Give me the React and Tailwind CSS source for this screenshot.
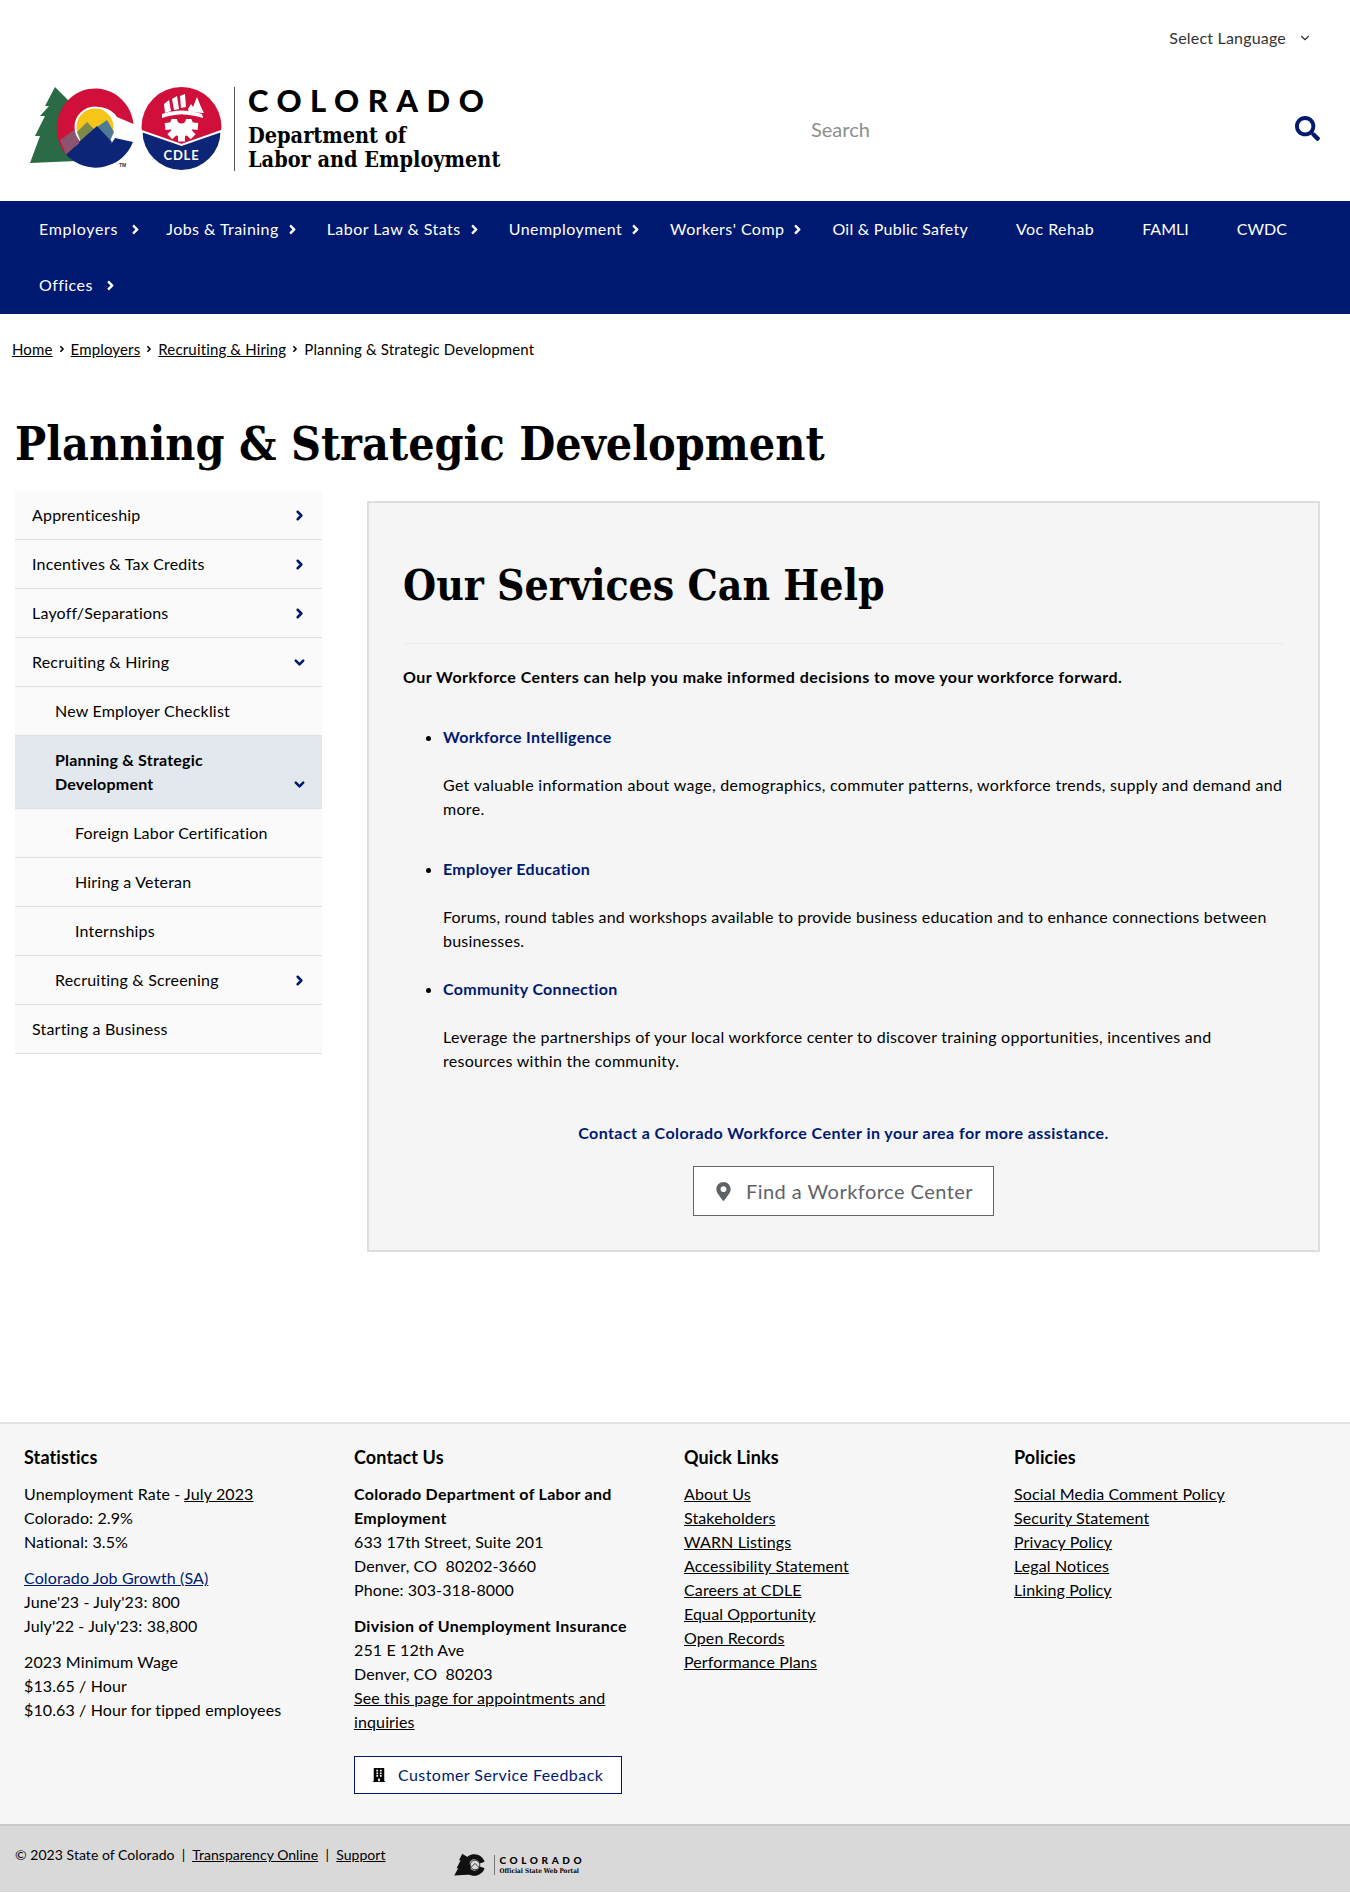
import React from "react";
import { FaSearch, FaAngleRight, FaMapMarkerAlt, FaBuilding } from "react-icons/fa";
import { ChevronDown, ChevronRight } from "lucide-react";

const navItems = [
    { label: "Employers", arrow: "wide", spacing: "tracking-[0.7px]" },
    { label: "Jobs & Training", arrow: "near" },
    { label: "Labor Law & Stats", arrow: "near" },
    { label: "Unemployment", arrow: "near" },
    { label: "Workers' Comp", arrow: "near" },
    { label: "Oil & Public Safety", spacing: "tracking-[0.25px]" },
    { label: "Voc Rehab" },
    { label: "FAMLI", spacing: "tracking-[0px]" },
    { label: "CWDC", spacing: "tracking-[0px]" },
    { label: "Offices", arrow: "wide" },
];

const sideItems = [
    { label: "Apprenticeship", icon: "right" },
    { label: "Incentives & Tax Credits", icon: "right" },
    { label: "Layoff/Separations", icon: "right" },
    { label: "Recruiting & Hiring", icon: "down" },
    { label: "New Employer Checklist", level: 1 },
    { label: "Planning & Strategic Development", level: 1, icon: "down", active: true },
    { label: "Foreign Labor Certification", level: 2 },
    { label: "Hiring a Veteran", level: 2 },
    { label: "Internships", level: 2 },
    { label: "Recruiting & Screening", level: 1, icon: "right" },
    { label: "Starting a Business" },
];

const gearTeeth = [95, 135, 180, 225, 265];

function Logo() {
    return (
        <svg width="210" height="90" viewBox="25 85 210 90" className="shrink-0">
            <defs>
                <clipPath id="gearClip">
                    <rect x="160" y="120" width="44" height="26" />
                </clipPath>
            </defs>
            <polygon points="55,88 45,107 49,107 40,117 45,117 35,137 40,137 30,164 76,162 72,105" fill="#2a6a45" />
            <path d="M133.5,125 A38.5,40 0 1,0 66,155.5 L80,143 A21,21 0 1,1 117,118 Z" fill="#d0103a" />
            <path d="M66,155.5 A40,40 0 0,0 133,143 L115,139 A21,21 0 0,1 80,143 Z" fill="#0c2577" />
            <polygon points="60,141 74,131 80,143 66,155.5" fill="#8d5470" />
            <circle cx="95" cy="128" r="19.5" fill="#f5c518" stroke="#fff" strokeWidth="2" />
            <polygon points="77,133 87,123 98,134 92,146 82,146" fill="#7d8a4c" />
            <polygon points="97,128 107,121 114,133 110,142 102,140" fill="#4f7a96" />
            <path d="M79,143 L97,127 L112,143 A19,19 0 0,1 79,143 Z" fill="#0c2577" />
            <text x="119" y="168" fontSize="5" fontWeight="700" fill="#333" fontFamily="Liberation Sans, sans-serif">TM</text>

            <circle cx="181.5" cy="128" r="40" fill="#d0103a" />
            <path d="M141.5,132 L181.5,146 L221.5,132 A40,40 0 0,1 141.5,132 Z" fill="#0c2577" stroke="#fff" strokeWidth="2" />
            <polygon points="164,105 169,101 171,112 165,114" fill="#fff" />
            <polygon points="172,100 177,97 179,110 174,111" fill="#fff" />
            <polygon points="180,97 185,95 186,108 181,109" fill="#fff" />
            <polygon points="188,110 191,105 193,108 197,98 201,108 204,114 189,113" fill="#fff" />
            <path d="M162,115 Q181,108 202,115 L203,119 Q181,112 162,119 Z" fill="#fff" />
            <g clipPath="url(#gearClip)" fill="#fff">
                <circle cx="181.5" cy="126" r="11.5" />
                {gearTeeth.map((deg) => (
                    <rect key={deg} x="178" y="109.5" width="7" height="7" transform={`rotate(${deg} 181.5 126)`} />
                ))}
            </g>
            <circle cx="181.5" cy="120" r="4.5" fill="#d0103a" />
            <text x="181.5" y="161" textAnchor="middle" fontSize="13" fontWeight="700" fill="#fff" fontFamily="Lato, sans-serif" letterSpacing="0.8">CDLE</text>
            <rect x="234" y="88" width="1.5" height="84" fill="#555" />
        </svg>
    );
}

function SmallLogo() {
    return (
        <svg width="38" height="24" viewBox="0 0 47 30" className="shrink-0">
            <polygon points="10,1 6,9 8,9 3,19 5,19 0,28 22,27 18,6" fill="#111" />
            <path d="M38,11 A13.5,13.5 0 1,0 38,19 L32,17 A7,7 0 1,1 32,13 Z" fill="#111" />
            <circle cx="26" cy="15" r="6" fill="none" stroke="#111" strokeWidth="1" />
            <path d="M21,18 L26,13 L31,18" fill="none" stroke="#111" strokeWidth="1" />
        </svg>
    );
}

function Header() {
    return (
        <header className="bg-white">
            <div className="flex justify-end items-center h-[76px] pr-[38px] text-[16px] tracking-[0.2px] text-[#333]">
                <span>Select Language</span>
                <ChevronDown size={14} strokeWidth={2} className="ml-[12px]" />
            </div>
            <div className="flex items-center h-[125px] pb-[20px] pl-[25px] pr-[30px]">
                <Logo />
                <div className="ml-[13px] w-[506px] text-black -mt-[2px]">
                    <div className="text-[31px] leading-[32px] font-black tracking-[8.5px] font-['Lato']">COLORADO</div>
                    <div className="mt-[8px] text-[21.5px] leading-[24px] font-bold font-['DejaVu_Serif_Condensed','DejaVu_Serif',serif]">Department of</div>
                    <div className="text-[21.5px] leading-[24px] font-bold font-['DejaVu_Serif_Condensed','DejaVu_Serif',serif]">Labor and Employment</div>
                </div>
                <div className="flex-1 flex items-center justify-between ml-[57px]">
                    <span className="text-[20px] text-[#8e8e8e]">Search</span>
                    <FaSearch size={25} className="text-[#001970]" />
                </div>
            </div>
        </header>
    );
}

function Nav() {
    return (
        <nav className="bg-[#001970] flex flex-wrap content-start px-[15px] text-white text-[16px] tracking-[0.45px] h-[113px]">
            {navItems.map((item) => (
                <a key={item.label} className={`flex items-center h-[56px] px-[24px] ${item.spacing || ""}`}>
                    <span>{item.label}</span>
                    {item.arrow === "wide" && <FaAngleRight size={15} className="ml-[10px] -mr-[25px]" />}
                    {item.arrow === "near" && <FaAngleRight size={15} className="ml-[6px] -mr-[21px]" />}
                </a>
            ))}
        </nav>
    );
}

function Breadcrumb() {
    return (
        <div className="flex items-center gap-[4px] px-[12px] pt-[25px] text-[15px] leading-[20px] tracking-[0.15px] text-black">
            <a className="underline">Home</a>
            <FaAngleRight size={10} />
            <a className="underline">Employers</a>
            <FaAngleRight size={10} />
            <a className="underline">Recruiting & Hiring</a>
            <FaAngleRight size={10} />
            <span>Planning & Strategic Development</span>
        </div>
    );
}

function SideNav() {
    return (
        <ul className="w-[307px] shrink-0 tracking-[0.2px]">
            {sideItems.map((item) => {
                const pad = item.level === 2 ? "pl-[60px]" : item.level === 1 ? "pl-[40px]" : "pl-[17px]";
                return (
                    <li
                        key={item.label}
                        className={`flex items-end justify-between pr-[15px] py-[12px] border-b border-[#e0e0e0] leading-[24px] text-[16px] text-black ${pad} ${
                            item.active ? "bg-[#e3e7ee] font-bold" : "bg-[#fafafa]"
                        }`}
                    >
                        <span className={item.active ? "w-[210px]" : ""}>{item.label}</span>
                        {item.icon === "right" && <ChevronRight size={15} strokeWidth={4} className="text-[#001970] mb-[4px]" />}
                        {item.icon === "down" && <ChevronDown size={15} strokeWidth={4} className="text-[#001970] mb-[4px]" />}
                    </li>
                );
            })}
        </ul>
    );
}

function Services() {
    return (
        <section className="flex-1 mt-[10px] bg-[#f5f5f5] border-2 border-[#dedede] px-[34px] pt-[56px] pb-[34px] text-[16px] leading-[24px] tracking-[0.3px] text-black">
            <h2 className="font-['DejaVu_Serif_Condensed','DejaVu_Serif',serif] font-bold text-[42.3px] leading-[52px] tracking-normal">Our Services Can Help</h2>
            <hr className="mt-[32px] border-[#ececec]" />
            <p className="mt-[21px] font-bold tracking-[0.46px]">Our Workforce Centers can help you make informed decisions to move your workforce forward.</p>
            <ul className="mt-[36px] pl-[40px] list-disc marker:text-black">
                <li className="font-bold text-[#001970]">Workforce Intelligence</li>
                <p className="mt-[24px]">Get valuable information about wage, demographics, commuter patterns, workforce trends, supply and demand and more.</p>
                <li className="mt-[36px] font-bold text-[#001970]">Employer Education</li>
                <p className="mt-[24px] tracking-[0.2px]">Forums, round tables and workshops available to provide business education and to enhance connections between businesses.</p>
                <li className="mt-[24px] font-bold text-[#001970]">Community Connection</li>
                <p className="mt-[24px] tracking-[0.27px]">Leverage the partnerships of your local workforce center to discover training opportunities, incentives and resources within the community.</p>
            </ul>
            <p className="mt-[48px] text-center font-bold text-[#001970] tracking-[0.43px]">Contact a Colorado Workforce Center in your area for more assistance.</p>
            <div className="mt-[21px] flex justify-center">
                <a className="flex items-center justify-center w-[301px] h-[50px] bg-white border border-[#666] text-[#5f6368] text-[20px] tracking-[0.47px]">
                    <FaMapMarkerAlt size={19} className="mr-[13px]" />
                    Find a Workforce Center
                </a>
            </div>
        </section>
    );
}

function Footer() {
    return (
        <footer className="mt-[170px] text-[16px] leading-[24px] tracking-[0.12px] text-black">
            <div className="bg-[#f7f7f7] border-t-2 border-[#e2e2e2] h-[402px] grid grid-cols-[330px_330px_330px_1fr] pl-[24px] pt-[21px]">
                <div>
                    <h4 className="font-bold text-[18px] mb-[13px]">Statistics</h4>
                    <p>Unemployment Rate - <a className="underline">July 2023</a></p>
                    <p>Colorado: 2.9%</p>
                    <p>National: 3.5%</p>
                    <p className="mt-[12px]"><a className="underline text-[#001970]">Colorado Job Growth (SA)</a></p>
                    <p>June'23 - July'23: 800</p>
                    <p>July'22 - July'23: 38,800</p>
                    <p className="mt-[12px]">2023 Minimum Wage</p>
                    <p>$13.65 / Hour</p>
                    <p>$10.63 / Hour for tipped employees</p>
                </div>
                <div className="w-[290px]">
                    <h4 className="font-bold text-[18px] mb-[13px]">Contact Us</h4>
                    <p className="font-bold tracking-[0.3px]">Colorado Department of Labor and Employment</p>
                    <p>633 17th Street, Suite 201</p>
                    <p>Denver, CO&nbsp; 80202-3660</p>
                    <p>Phone: 303-318-8000</p>
                    <p className="mt-[12px] font-bold tracking-[0.3px]">Division of Unemployment Insurance</p>
                    <p>251 E 12th Ave</p>
                    <p>Denver, CO&nbsp; 80203</p>
                    <p><a className="underline">See this page for appointments and inquiries</a></p>
                    <a className="mt-[22px] flex items-center w-[268px] h-[38px] pl-[17px] bg-white border border-[#001970] text-[#001970] tracking-[0.44px]">
                        <FaBuilding size={14} className="text-black mr-[12px]" />
                        Customer Service Feedback
                    </a>
                </div>
                <div>
                    <h4 className="font-bold text-[18px] mb-[13px]">Quick Links</h4>
                    {["About Us", "Stakeholders", "WARN Listings", "Accessibility Statement", "Careers at CDLE", "Equal Opportunity", "Open Records", "Performance Plans"].map((l) => (
                        <p key={l}><a className="underline">{l}</a></p>
                    ))}
                </div>
                <div>
                    <h4 className="font-bold text-[18px] mb-[13px]">Policies</h4>
                    {["Social Media Comment Policy", "Security Statement", "Privacy Policy", "Legal Notices", "Linking Policy"].map((l) => (
                        <p key={l}><a className="underline">{l}</a></p>
                    ))}
                </div>
            </div>
            <div className="bg-[#d9d9d9] border-t-2 border-[#c8c8c8] h-[68px] flex items-start pl-[15px] pt-[19px] text-[14px] leading-[20px] tracking-[0.04px]">
                <span>© 2023 State of Colorado &nbsp;|&nbsp; <a className="underline">Transparency Online</a> &nbsp;|&nbsp; <a className="underline">Support</a></span>
                <div className="ml-[68px] mt-[8px] flex items-center">
                    <SmallLogo />
                    <div className="ml-[2px] pl-[5px] border-l border-[#777] leading-none">
                        <div className="text-[10px] font-black tracking-[3.6px] font-['Lato']">COLORADO</div>
                        <div className="text-[6.4px] mt-[3px] font-bold font-['DejaVu_Serif_Condensed','DejaVu_Serif',serif] tracking-normal">Official State Web Portal</div>
                    </div>
                </div>
            </div>
        </footer>
    );
}

export default function App() {
    return (
        <div className="w-[1350px] bg-white font-['Lato','Liberation_Sans',sans-serif]">
            <Header />
            <Nav />
            <Breadcrumb />
            <h1 className="mt-[55px] pl-[15px] font-['DejaVu_Serif_Condensed','DejaVu_Serif',serif] font-bold text-[46.2px] leading-[60px] text-black">Planning & Strategic Development</h1>
            <div className="mt-[17px] flex pl-[15px] pr-[30px] gap-[45px]">
                <SideNav />
                <Services />
            </div>
            <Footer />
        </div>
    );
}
